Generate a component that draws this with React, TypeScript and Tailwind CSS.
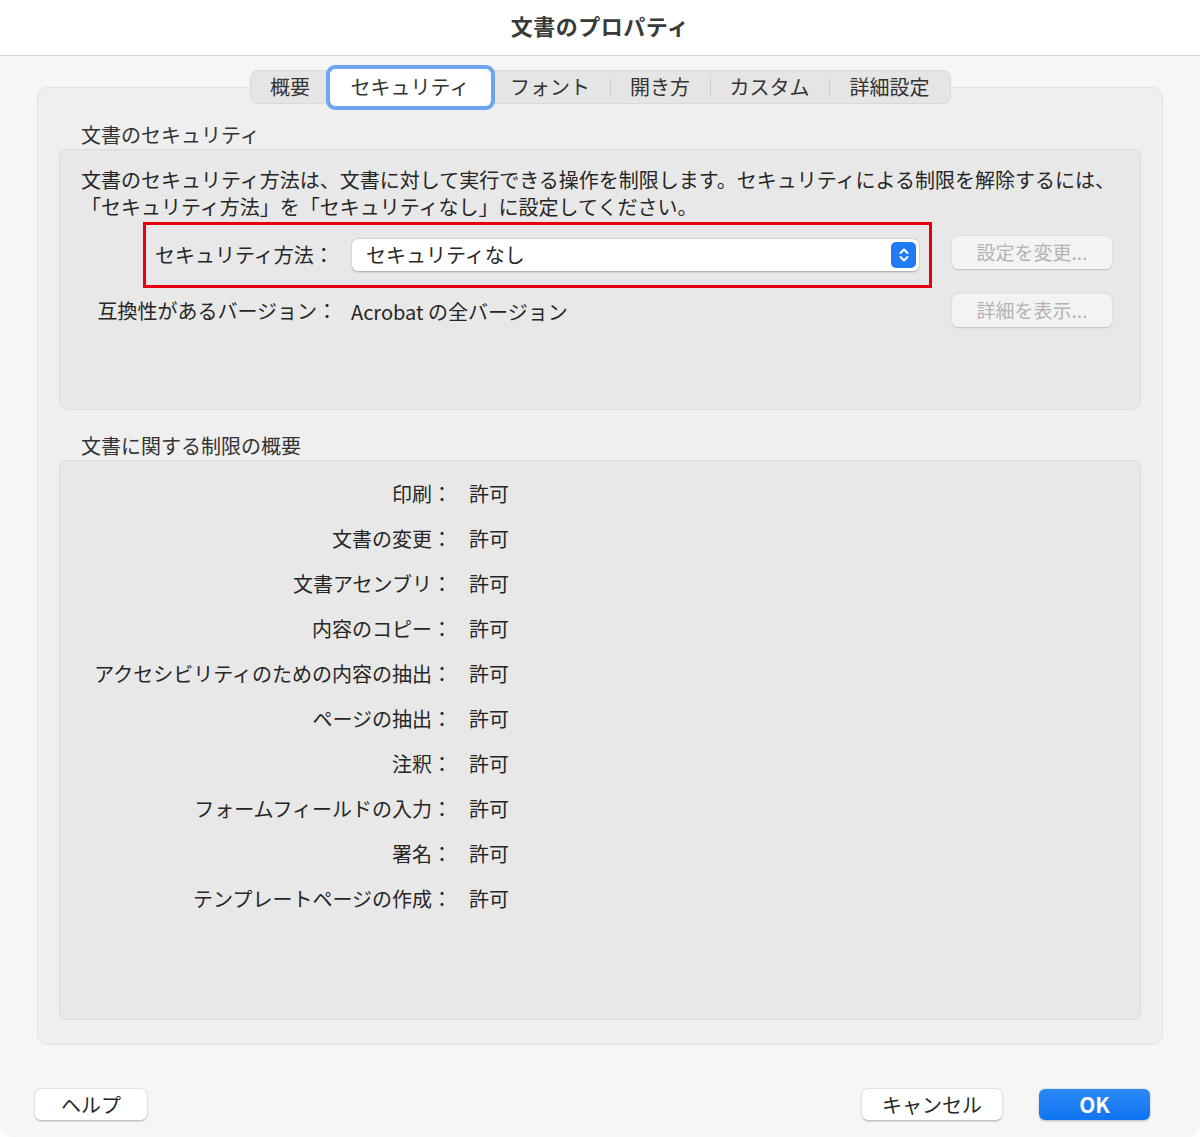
import React from "react";

const rows = [
  "印刷",
  "文書の変更",
  "文書アセンブリ",
  "内容のコピー",
  "アクセシビリティのための内容の抽出",
  "ページの抽出",
  "注釈",
  "フォームフィールドの入力",
  "署名",
  "テンプレートページの作成",
];

function Stepper() {
  return (
    <div className="w-[25px] h-[26px] rounded-[5px] bg-[#1f7cf3] flex items-center justify-center">
      <svg width="12" height="18" viewBox="0 0 12 18" fill="none">
        <path d="M2.5 7 L6 3.5 L9.5 7" stroke="white" strokeWidth="2" strokeLinecap="round" strokeLinejoin="round" />
        <path d="M2.5 11 L6 14.5 L9.5 11" stroke="white" strokeWidth="2" strokeLinecap="round" strokeLinejoin="round" />
      </svg>
    </div>
  );
}

function DisabledButton({ label }: { label: string }) {
  return (
    <div className="w-[160px] h-[33px] rounded-[6px] bg-[#f3f3f3] shadow-[0_0.5px_1.5px_rgba(0,0,0,0.18)] flex items-center justify-center text-[19px] text-[#b3b3b3]">
      {label}
    </div>
  );
}

export default function App() {
  return (
    <div className="w-[1200px] h-[1137px] bg-white font-['Noto_Sans_CJK_JP','Noto_Sans',sans-serif] text-[#262626]">
      <div className="w-full h-full rounded-b-[12px] bg-[#f6f6f6] flex flex-col overflow-hidden">
        {/* Title bar */}
        <div className="h-[56px] bg-white border-b border-[#d6d6d6] flex items-center justify-center">
          <span className="text-[22px] font-bold text-[#3a3a3a] tracking-[0.5px] -mt-[4px]">文書のプロパティ</span>
        </div>

        {/* Body */}
        <div className="px-[37px] pt-[14px] flex flex-col">
          {/* Tabs */}
          <div className="relative z-10 flex justify-center">
            <div className="h-[34px] w-[701px] rounded-[8px] bg-[#e5e5e5] border border-[#d9d9d9] flex items-center text-[20px] text-[#333]">
              <div className="w-[79px] text-center">概要</div>
              <div className="w-[161px] h-[37px] rounded-[5px] bg-white outline-4 outline-solid outline-[#6ea5f1] flex items-center justify-center shadow-[0_0.5px_1px_rgba(0,0,0,0.2)]">
                セキュリティ
              </div>
              <div className="w-[119px] text-center">フォント</div>
              <div className="w-px h-[18px] bg-[#cfcfcf]" />
              <div className="w-[99px] text-center">開き方</div>
              <div className="w-px h-[18px] bg-[#cfcfcf]" />
              <div className="w-[118px] text-center">カスタム</div>
              <div className="w-px h-[18px] bg-[#cfcfcf]" />
              <div className="flex-1 text-center">詳細設定</div>
            </div>
          </div>

          {/* Group box */}
          <div className="-mt-[17px] h-[958px] rounded-[10px] bg-[#efefef] border border-[#e3e3e3] px-[21px] pt-[33px] flex flex-col">
            <div className="pl-[22px] text-[20px] leading-[28px] text-[#333]">文書のセキュリティ</div>

            {/* Panel 1 */}
            <div className="h-[261px] rounded-[8px] bg-[#e8e8e8] border border-[#dcdcdc] pt-[16px] flex flex-col">
              <div className="pl-[21px] text-[20px] leading-[27px] whitespace-nowrap">
                文書のセキュリティ方法は、文書に対して実行できる操作を制限します。セキュリティによる制限を解除するには、
                <br />
                「セキュリティ方法」を「セキュリティなし」に設定してください。
              </div>

              <div className="flex items-start mt-[2px]">
                <div className="ml-[83px] w-[789px] h-[66px] border-[3px] border-[#e4000f] flex items-center">
                  <div className="ml-[9px] w-[180px] text-[20px]">セキュリティ方法：</div>
                  <div className="ml-[17px] w-[567px] h-[32px] rounded-[6px] bg-white shadow-[0_0.5px_2px_rgba(0,0,0,0.3)] flex items-center pl-[14px] pr-[3px]">
                    <span className="flex-1 text-[20px]">セキュリティなし</span>
                    <Stepper />
                  </div>
                </div>
                <div className="ml-[20px] mt-[14px]">
                  <DisabledButton label="設定を変更..." />
                </div>
              </div>

              <div className="flex items-start mt-[6px]">
                <div className="w-[277px] h-[33px] text-right text-[20px] flex items-center justify-end">互換性があるバージョン：</div>
                <div className="ml-[14px] w-[601px] h-[33px] flex items-center text-[20px] pt-[3px]">Acrobat の全バージョン</div>
                <DisabledButton label="詳細を表示..." />
              </div>
            </div>

            <div className="mt-[22px] pl-[22px] text-[20px] leading-[28px] text-[#333]">文書に関する制限の概要</div>

            {/* Panel 2 */}
            <div className="h-[560px] rounded-[8px] bg-[#e8e8e8] border border-[#dcdcdc] pt-[10px] flex flex-col">
              {rows.map((r) => (
                <div key={r} className="h-[45px] flex items-center text-[20px]">
                  <div className="w-[392px] text-right">{r}：</div>
                  <div className="ml-[17px]">許可</div>
                </div>
              ))}
            </div>
          </div>

          {/* Bottom buttons */}
          <div className="mt-[44px] flex items-center -mx-[2px]">
            <div className="w-[112px] h-[31px] rounded-[6px] bg-white shadow-[0_0.5px_2px_rgba(0,0,0,0.3)] flex items-center justify-center text-[20px]">
              ヘルプ
            </div>
            <div className="flex-1" />
            <div className="w-[140px] h-[31px] rounded-[6px] bg-white shadow-[0_0.5px_2px_rgba(0,0,0,0.3)] flex items-center justify-center text-[20px]">
              キャンセル
            </div>
            <div className="ml-[37px] mr-[15px] w-[111px] h-[31px] rounded-[6px] bg-gradient-to-b from-[#2a88f7] to-[#0f74f2] shadow-[0_0.5px_2px_rgba(0,0,0,0.25)] flex items-center justify-center text-[21px] font-semibold text-white">
              OK
            </div>
          </div>
        </div>
      </div>
    </div>
  );
}
